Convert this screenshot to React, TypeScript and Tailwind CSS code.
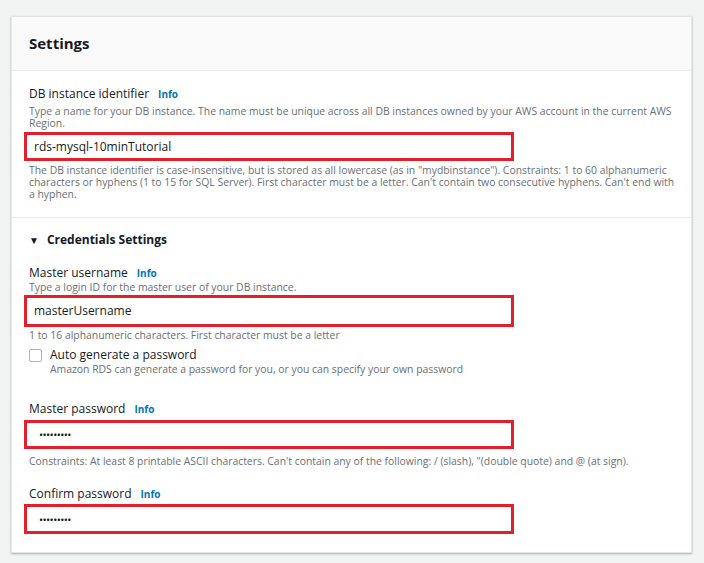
import React from "react";

function Info() {
  return <span className="ml-[9px] text-[10px] font-bold text-[#0073bb]">Info</span>;
}

function Label({ children }: { children: React.ReactNode }) {
  return (
    <div className="flex items-baseline text-[12px] leading-[16px] text-[#16191f]">
      <span>{children}</span>
      <Info />
    </div>
  );
}

function Hint({ children, className = "" }: { children: React.ReactNode; className?: string }) {
  return <p className={`text-[10.4px] leading-[12px] text-[#687078] ${className}`}>{children}</p>;
}

function RedInput({ value, password, h = "h-[29px]" }: { value: string; password?: boolean; h?: string }) {
  return (
    <div className={`w-[490px] -ml-[5px] border-[3px] border-[#e21f2a] bg-white px-[7px] flex items-center ${h}`}>
      {password ? (
        <span className="ml-[5px] text-[11px] tracking-[-0.6px] leading-none text-[#16191f]">{value}</span>
      ) : (
        <span className="text-[12px] text-[#16191f]">{value}</span>
      )}
    </div>
  );
}

export default function App() {
  return (
    <div
      className="w-[704px] h-[563px] bg-[#f2f3f3] pt-[16px] px-[11px]"
      style={{ fontFamily: '"Open Sans", "Noto Sans", sans-serif' }}
    >
      <div className="w-[681px] h-[537px] bg-white shadow-[0_1px_2px_rgba(0,0,0,0.3)] border border-[#e4e6e6]">
        <div className="h-[54px] bg-[#fafafa] border-b border-[#eaeded] px-[17px] flex items-center">
          <h2 className="text-[15px] font-bold text-[#16191f]">Settings</h2>
        </div>

        <div className="px-[17px] pt-[15px] pb-[17px] border-b border-[#eaeded]">
          <Label>DB instance identifier</Label>
          <Hint className="mt-[3px] w-[650px]">
            Type a name for your DB instance. The name must be unique across all DB instances owned by your AWS account in the current AWS Region.
          </Hint>
          <div className="mt-[3px]">
            <RedInput value="rds-mysql-10minTutorial" />
          </div>
          <Hint className="mt-[3px] w-[650px]">
            The DB instance identifier is case-insensitive, but is stored as all lowercase (as in "mydbinstance"). Constraints: 1 to 60 alphanumeric characters or hyphens (1 to 15 for SQL Server). First character must be a letter. Can't contain two consecutive hyphens. Can't end with a hyphen.
          </Hint>
        </div>

        <div className="px-[17px] pt-[13px]">
          <div className="flex items-center text-[12px] font-bold text-[#16191f]">
            <span className="text-[10px] leading-none mr-[8px]">▼</span>
            Credentials Settings
          </div>

          <div className="mt-[16px]">
            <Label>Master username</Label>
            <Hint>Type a login ID for the master user of your DB instance.</Hint>
            <div className="mt-[2px]">
              <RedInput value="masterUsername" h="h-[32px]" />
            </div>
            <Hint className="mt-[2px]">1 to 16 alphanumeric characters. First character must be a letter</Hint>
            <div className="flex mt-[6px]">
              <div className="w-[13px] h-[13px] mt-[2px] border border-[#aab7b8] rounded-[2px] bg-white" />
              <div className="ml-[8px]">
                <div className="text-[12px] leading-[16px] text-[#16191f]">Auto generate a password</div>
                <Hint>Amazon RDS can generate a password for you, or you can specify your own password</Hint>
              </div>
            </div>
          </div>

          <div className="mt-[26px]">
            <Label>Master password</Label>
            <div className="mt-[3px]">
              <RedInput value="•••••••••" password />
            </div>
            <Hint className="mt-[6px]">
              Constraints: At least 8 printable ASCII characters. Can't contain any of the following: / (slash), "(double quote) and @ (at sign).
            </Hint>
          </div>

          <div className="mt-[19px]">
            <Label>Confirm password</Label>
            <div className="mt-[2px]">
              <RedInput value="•••••••••" password h="h-[30px]" />
            </div>
          </div>
        </div>
      </div>
    </div>
  );
}
